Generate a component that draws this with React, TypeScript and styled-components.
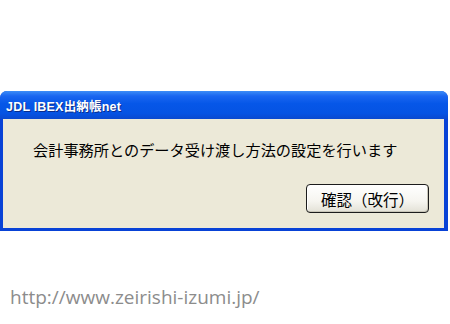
import * as React from 'react'
import styled, {createGlobalStyle} from 'styled-components'

const GlobalStyle = createGlobalStyle`
  html, body {
    margin: 0;
    padding: 0;
    background: #ffffff;
  }
  body {
    width: 450px;
    height: 324px;
    overflow: hidden;
  }
`

const Page = styled('div')`
  display: flex;
  flex-direction: column;
  padding-top: 91px;
`

const Window = styled('div')`
  display: flex;
  flex-direction: column;
  width: 448px;
  border-radius: 7px 7px 0 0;
  background: #0842d6;
  overflow: hidden;
`

const TitleBar = styled('div')`
  display: flex;
  align-items: center;
  height: 28px;
  padding-left: 6px;
  background: linear-gradient(180deg, #3d8df7 0%, #1a66f0 18%, #0657e8 45%, #0553e3 80%, #0a49cf 100%);
  color: #ffffff;
  font-family: "Liberation Sans", "Noto Sans CJK JP", sans-serif;
  font-weight: bold;
  font-size: 12.5px;
  text-shadow: 1px 1px 0 #0a2c8a;
  letter-spacing: 0.2px;
`

const Body = styled('div')`
  display: flex;
  flex-direction: column;
  height: 109px;
  margin: 0 4px 3px 3px;
  background: #ece9d8;
`

const Message = styled('p')`
  margin: 20px 0 0 30px;
  font-family: "Noto Sans CJK JP", sans-serif;
  font-size: 15.2px;
  line-height: 20px;
  color: #000000;
`

const Actions = styled('div')`
  display: flex;
  justify-content: flex-end;
  margin-top: auto;
  padding: 0 15px 15px 0;
`

const Button = styled('button')`
  width: 123px;
  height: 29px;
  border: 1px solid #1c1c1c;
  border-radius: 4px;
  background: linear-gradient(180deg, #ffffff 0%, #f6f5f0 60%, #e3e1d6 100%);
  box-shadow: inset -1px -1px 0 #c9c6b8, inset 1px 1px 0 #ffffff;
  font-family: "Noto Sans CJK JP", sans-serif;
  font-size: 15.5px;
  color: #000000;
  padding: 0;
`

const Url = styled('div')`
  margin: 54px 0 0 10px;
  font-family: "Open Sans", "Noto Sans", sans-serif;
  font-size: 19px;
  line-height: 24px;
  color: #8c8c8c;
`

const App = () => (
  <Page>
    <GlobalStyle />
    <Window>
      <TitleBar>JDL IBEX出納帳net</TitleBar>
      <Body>
        <Message>会計事務所とのデータ受け渡し方法の設定を行います</Message>
        <Actions>
          <Button>確認（改行）</Button>
        </Actions>
      </Body>
    </Window>
    <Url>http://www.zeirishi-izumi.jp/</Url>
  </Page>
)

export default App
